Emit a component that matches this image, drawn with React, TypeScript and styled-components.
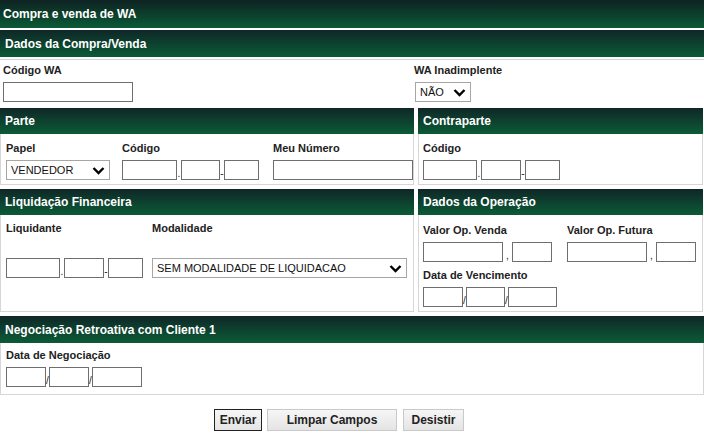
import styled, { createGlobalStyle } from 'styled-components';

const GlobalStyle = createGlobalStyle`
  body {
    margin: 0;
    background: #fff;
    font-family: 'Liberation Sans', Arial, sans-serif;
  }
`;

const Page = styled.div`
  width: 704px;
  display: flex;
  flex-direction: column;
`;

const TitleBar = styled.div`
  height: 28px;
  display: flex;
  align-items: center;
  padding-left: 3px;
  background: linear-gradient(#0e2222, #0b5a36);
  color: #fff;
  font-size: 12px;
  font-weight: bold;
`;

const Header = styled.div<{ $h?: number }>`
  height: ${(p) => p.$h ?? 26}px;
  display: flex;
  align-items: center;
  padding-left: 5px;
  background: linear-gradient(#0f2727, #0b5b37);
  color: #fff;
  font-size: 12px;
  font-weight: bold;
`;

const Columns = styled.div`
  display: grid;
  grid-template-columns: 414px 285px;
  column-gap: 4px;
  margin-top: 4px;
`;

const Panel = styled.section`
  display: flex;
  flex-direction: column;
`;

const Body = styled.div<{ $pad?: string }>`
  flex: 1;
  border: 1px solid #d6d6d6;
  border-top: none;
  padding: ${(p) => p.$pad || '7px 5px 5px'};
  display: flex;
  flex-direction: column;
`;

const TopBody = styled.div`
  margin-top: 2px;
  border-top: 1px solid #cfd3d3;
  padding: 4px 0 4px 3px;
  display: flex;
`;

const Row = styled.div`
  display: flex;
`;

const Field = styled.div<{ $w?: number }>`
  display: flex;
  flex-direction: column;
  width: ${(p) => (p.$w ? `${p.$w}px` : 'auto')};
`;

const Label = styled.label`
  font-size: 11px;
  font-weight: bold;
  color: #222;
  line-height: 13px;
  margin-bottom: 5px;
  white-space: nowrap;
`;

const Group = styled.div`
  display: flex;
  align-items: flex-end;
`;

const Input = styled.div<{ $w: number }>`
  width: ${(p) => p.$w}px;
  height: 20px;
  box-sizing: border-box;
  border: 1px solid #6e6e6e;
  background: #fff;
`;

const Sep = styled.span<{ $w: number }>`
  width: ${(p) => p.$w}px;
  font-size: 10px;
  line-height: 10px;
  color: #222;
  text-align: center;
  padding-bottom: 1px;
`;

const Select = styled.div<{ $w: number }>`
  width: ${(p) => p.$w}px;
  height: 20px;
  box-sizing: border-box;
  border: 1px solid #a6a6a6;
  display: flex;
  align-items: center;
  justify-content: space-between;
  padding: 0 4px 0 4px;
  font-size: 11px;
  color: #111;
`;

const Actions = styled.div`
  display: flex;
  gap: 5px;
  margin-top: 14px;
  padding-left: 214px;
`;

const Button = styled.button<{ $w: number; $primary?: boolean }>`
  width: ${(p) => p.$w}px;
  height: 22px;
  border: 1px solid ${(p) => (p.$primary ? '#222' : '#c9c9c9')};
  background: linear-gradient(#f6f6f6, #e4e4e4);
  font-family: inherit;
  font-size: 12px;
  font-weight: bold;
  color: #222;
  padding: 0;
`;

const Chevron = () => (
  <svg width='13' height='9' viewBox='0 0 13 9'>
    <path d='M1.5 2 L6.5 7 L11.5 2' fill='none' stroke='#000' strokeWidth='2.4' />
  </svg>
);

// seps holds one character per gap between inputs
const Split = ({
  widths,
  seps,
  gap = 4,
}: {
  widths: number[];
  seps: string;
  gap?: number;
}) => (
  <Group>
    {widths.map((w, i) => (
      <Group key={i}>
        {i > 0 && <Sep $w={gap}>{seps[Math.min(i - 1, seps.length - 1)]}</Sep>}
        <Input $w={w} />
      </Group>
    ))}
  </Group>
);

const App = () => {
  return (
    <Page>
      <GlobalStyle />
      <TitleBar>Compra e venda de WA</TitleBar>
      <Header $h={27} style={{ marginTop: 2 }}>
        Dados da Compra/Venda
      </Header>
      <TopBody>
        <Field $w={411}>
          <Label>Código WA</Label>
          <Input $w={130} />
        </Field>
        <Field>
          <Label>WA Inadimplente</Label>
          <Select $w={56} style={{ marginLeft: 1 }}>
            NÃO <Chevron />
          </Select>
        </Field>
      </TopBody>

      <Columns style={{ marginTop: 2 }}>
        <Panel>
          <Header>Parte</Header>
          <Body $pad='8px 0 4px 5px'>
            <Row>
              <Field $w={116}>
                <Label>Papel</Label>
                <Select $w={104}>
                  VENDEDOR <Chevron />
                </Select>
              </Field>
              <Field $w={151}>
                <Label>Código</Label>
                <Split widths={[55, 39, 35]} seps='.-' />
              </Field>
              <Field>
                <Label>Meu Número</Label>
                <Input $w={140} />
              </Field>
            </Row>
          </Body>
        </Panel>
        <Panel>
          <Header>Contraparte</Header>
          <Body $pad='8px 0 4px 4px'>
            <Field>
              <Label>Código</Label>
              <Split widths={[54, 40, 35]} seps='.-' />
            </Field>
          </Body>
        </Panel>
      </Columns>

      <Columns>
        <Panel>
          <Header>Liquidação Financeira</Header>
          <Body $pad='7px 0 5px 5px'>
            <Row>
              <Field $w={146}>
                <Label>Liquidante</Label>
              </Field>
              <Field>
                <Label>Modalidade</Label>
              </Field>
            </Row>
            <Row style={{ marginTop: 18 }}>
              <Field $w={146}>
                <Split widths={[54, 40, 35]} seps='.-' />
              </Field>
              <Select $w={255}>
                SEM MODALIDADE DE LIQUIDACAO <Chevron />
              </Select>
            </Row>
          </Body>
        </Panel>
        <Panel>
          <Header>Dados da Operação</Header>
          <Body $pad='9px 0 4px 4px'>
            <Row>
              <Field $w={144}>
                <Label>Valor Op. Venda</Label>
                <Split widths={[80, 40]} seps=',' gap={9} />
              </Field>
              <Field>
                <Label>Valor Op. Futura</Label>
                <Split widths={[80, 40]} seps=',' gap={9} />
              </Field>
            </Row>
            <Field style={{ marginTop: 7 }}>
              <Label>Data de Vencimento</Label>
              <Split widths={[40, 39, 49]} seps='/' gap={3} />
            </Field>
          </Body>
        </Panel>
      </Columns>

      <Panel style={{ marginTop: 4 }}>
        <Header $h={27}>Negociação Retroativa com Cliente 1</Header>
        <Body $pad='6px 0 7px 5px'>
          <Field>
            <Label>Data de Negociação</Label>
            <Split widths={[40, 40, 50]} seps='/' gap={3} />
          </Field>
        </Body>
      </Panel>

      <Actions>
        <Button $w={48} $primary>
          Enviar
        </Button>
        <Button $w={130}>Limpar Campos</Button>
        <Button $w={61} style={{ marginLeft: 1 }}>
          Desistir
        </Button>
      </Actions>
    </Page>
  );
};

export default App;
